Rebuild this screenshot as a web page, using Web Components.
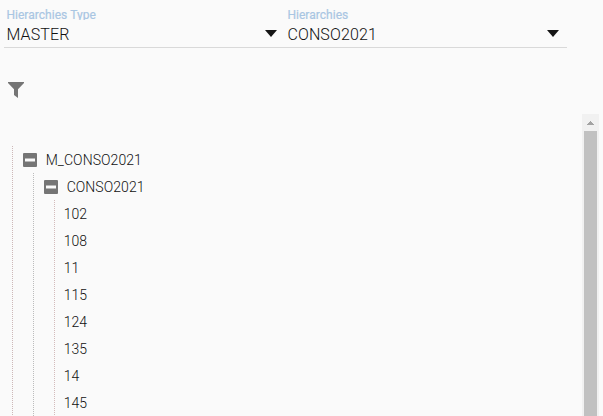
<!DOCTYPE html>
<html lang="en"><head><meta charset="utf-8"><title>Hierarchies</title>
<style>html,body{margin:0;height:100%;overflow:hidden;background:#fafafa}</style></head>
<body>
<hierarchy-page></hierarchy-page>
<script>
const define = (name, html, init) => {
  const t = document.createElement('template');
  t.innerHTML = html;
  customElements.define(name, class extends HTMLElement {
    constructor() {
      super();
      this.attachShadow({mode: 'open'}).append(t.content.cloneNode(true));
    }
    connectedCallback() { if (init) init(this, this.shadowRoot); }
  });
};

define('select-field', `
<style>
:host{display:block;box-sizing:border-box;height:48px;padding:8px 0 0 2.4px;border-bottom:1px solid #d9d9d9}
.label{height:12px;line-height:14px;font-size:12px;letter-spacing:.04px;color:#a9c6e3;overflow:hidden;white-space:nowrap;-webkit-text-stroke:.2px #a9c6e3}
.row{display:flex;align-items:center;justify-content:space-between;height:27px;padding-right:7.6px}
.value{font-size:16px;line-height:27px;padding-top:2px;color:#111;font-weight:300;letter-spacing:.13px}
svg{display:block;margin-top:-1px}
</style>
<div class="label"></div>
<div class="row"><span class="value"><slot></slot></span>
<svg width="12" height="7" viewBox="0 0 12 7"><path d="M0 0H12L6 7Z" fill="#151515"/></svg></div>`,
(el, r) => { r.querySelector('.label').textContent = el.getAttribute('label'); });

define('filter-icon', `
<style>:host{display:block;width:16px;height:16px}svg{display:block}</style>
<svg width="16" height="16" viewBox="0 0 16 16"><path d="M0 0H16V1L10 7.3V16L6 13V7.3L0 1Z" fill="#757575"/></svg>`);

define('tree-node', `
<style>
:host{display:block}
.row{display:flex;align-items:center;height:27px;padding-left:8.7px;font-size:14px;font-weight:300;letter-spacing:.06px;color:#111;white-space:nowrap}
svg{display:none;margin:1px 8.7px 0 1.3px}
:host([open]) svg{display:block}
.text{padding-top:1px}
.kids{display:none;margin-left:20px}
:host([open]) .kids{display:block}
</style>
<div class="row"><svg width="14" height="14" viewBox="0 0 14 14"><rect width="14" height="14" rx="1" fill="#757575"/><rect x="2" y="5.5" width="10" height="3" fill="#fafafa"/></svg><span class="text"></span></div>
<div class="kids"><slot></slot></div>`,
(el, r) => { r.querySelector('.text').textContent = el.getAttribute('text'); });

define('tree-branch', `
<style>
:host{display:block;padding-left:1px;background:repeating-linear-gradient(to bottom,var(--dot,#cdb8b8) 0 1px,transparent 1px 2px) 0 0/1px 100% no-repeat}
</style><slot></slot>`);

define('scroll-rail', `
<style>
:host{display:flex;flex-direction:column;width:17px;background:#f1f1f1}
.up{height:17px;display:grid;place-items:center}
.thumb{flex:1;margin:0 2px;background:#c1c1c1}
</style>
<div class="up"><svg width="7" height="4" viewBox="0 0 7 4" shape-rendering="crispEdges"><path d="M3 0h1v1h1v1h1v1h1v1H0V3h1V2h1V1h1Z" fill="#a3a3a3"/></svg></div><div class="thumb"></div>`);

define('hierarchy-page', `
<style>
:host{display:flex;flex-direction:column;box-sizing:border-box;width:603px;height:416px;overflow:hidden;font-family:Roboto,sans-serif;background:#fafafa}
.fields{display:grid;grid-template-columns:281px 282px;padding-left:4px}
filter-icon{margin:34px 0 16px 8px}
.body{display:flex;justify-content:space-between;flex:1;min-height:0;padding-right:4px}
.tree{padding:32px 0 0 12px;overflow:hidden}
</style>
<div class="fields"><select-field label="Hierarchies Type">MASTER</select-field><select-field label="Hierarchies">CONSO2021</select-field></div>
<filter-icon></filter-icon>
<div class="body"><div class="tree">
<tree-branch><tree-node open text="M_CONSO2021">
<tree-branch style="--dot:#bcbcbc"><tree-node open text="CONSO2021">
<tree-branch style="--dot:#d3bbbb"><tree-node text="102"></tree-node><tree-node text="108"></tree-node><tree-node text="11"></tree-node><tree-node text="115"></tree-node><tree-node text="124"></tree-node><tree-node text="135"></tree-node><tree-node text="14"></tree-node><tree-node text="145"></tree-node></tree-branch>
</tree-node></tree-branch>
</tree-node></tree-branch>
</div><scroll-rail></scroll-rail></div>`);
</script>
</body></html>
